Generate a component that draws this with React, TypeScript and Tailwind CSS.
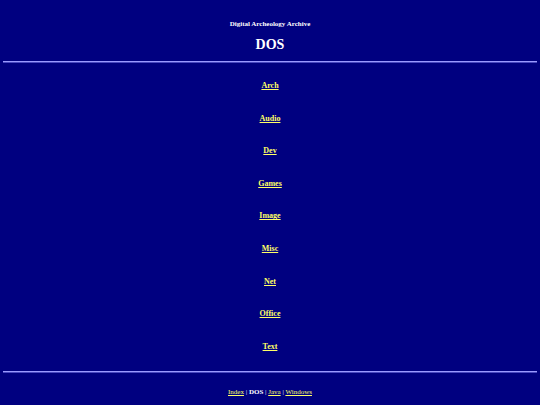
const sections = ["Arch", "Audio", "Dev", "Games", "Image", "Misc", "Net", "Office", "Text"];

const serif = { fontFamily: '"Liberation Serif", "Times New Roman", serif' };

export default function App() {
  return (
    <div className="min-h-[405px] w-[540px] bg-[#000080] text-white" style={serif}>
      <div className="flex flex-col items-center pt-[19px]">
        <p className="text-[7px] leading-[10px] font-bold">Digital Archeology Archive</p>
        <h1 className="mt-[8px] text-[14px] leading-[16px] font-bold">DOS</h1>
      </div>
      <div className="mx-[3px] mt-[8px] h-[2px] border-t border-[#9a9aff] bg-[#4848c0]" />
      <ul className="flex flex-col items-center pt-[18px]">
        {sections.map((name) => (
          <li key={name} className="h-[32.6px] text-[8px] leading-[10px] font-bold">
            <a href="#" className="text-[#ffff66] underline">{name}</a>
          </li>
        ))}
      </ul>
      <div className="mx-[3px] mt-[-3px] h-[2px] border-t border-[#9a9aff] bg-[#4848c0]" />
      <p className="pt-[15px] text-center text-[7px] leading-[9px]">
        <a href="#" className="text-[#ffff66] underline">Index</a>
        {" | "}
        <b>DOS</b>
        {" | "}
        <a href="#" className="text-[#ffff66] underline">Java</a>
        {" | "}
        <a href="#" className="text-[#ffff66] underline">Windows</a>
      </p>
    </div>
  );
}
